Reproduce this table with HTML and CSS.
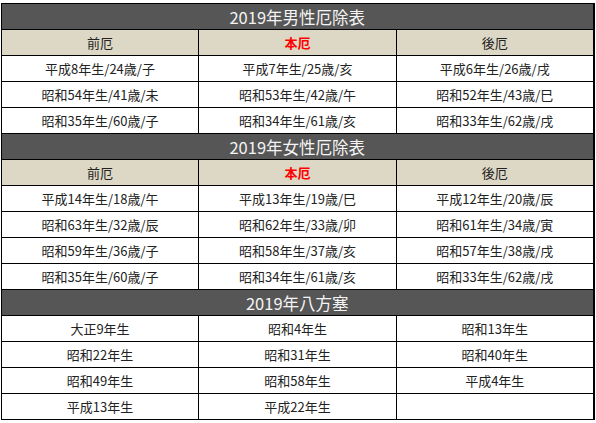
FILE: index.html
```html
<!DOCTYPE html>
<html lang="ja">
<head>
<meta charset="utf-8">
<link rel="stylesheet" href="styles.css">
</head>
<body>
<table class="yaku">
  <colgroup><col class="c1"><col class="c2"><col class="c3"></colgroup>
  <tr><th class="title" colspan="3">2019年男性厄除表</th></tr>
  <tr class="head"><td>前厄</td><td class="hon">本厄</td><td>後厄</td></tr>
  <tr><td>平成8年生/24歳/子</td><td>平成7年生/25歳/亥</td><td>平成6年生/26歳/戌</td></tr>
  <tr><td>昭和54年生/41歳/未</td><td>昭和53年生/42歳/午</td><td>昭和52年生/43歳/巳</td></tr>
  <tr><td>昭和35年生/60歳/子</td><td>昭和34年生/61歳/亥</td><td>昭和33年生/62歳/戌</td></tr>
  <tr><th class="title" colspan="3">2019年女性厄除表</th></tr>
  <tr class="head"><td>前厄</td><td class="hon">本厄</td><td>後厄</td></tr>
  <tr><td>平成14年生/18歳/午</td><td>平成13年生/19歳/巳</td><td>平成12年生/20歳/辰</td></tr>
  <tr><td>昭和63年生/32歳/辰</td><td>昭和62年生/33歳/卯</td><td>昭和61年生/34歳/寅</td></tr>
  <tr><td>昭和59年生/36歳/子</td><td>昭和58年生/37歳/亥</td><td>昭和57年生/38歳/戌</td></tr>
  <tr><td>昭和35年生/60歳/子</td><td>昭和34年生/61歳/亥</td><td>昭和33年生/62歳/戌</td></tr>
  <tr><th class="title" colspan="3">2019年八方塞</th></tr>
  <tr><td>大正9年生</td><td>昭和4年生</td><td>昭和13年生</td></tr>
  <tr><td>昭和22年生</td><td>昭和31年生</td><td>昭和40年生</td></tr>
  <tr><td>昭和49年生</td><td>昭和58年生</td><td>平成4年生</td></tr>
  <tr><td>平成13年生</td><td>平成22年生</td><td></td></tr>
</table>
</body>
</html>
```
FILE: styles.css
```css
html, body {
  margin: 0;
  padding: 0;
  background: #ffffff;
}
body {
  padding: 3px 0 0 1px;
  font-family: "Noto Sans CJK JP", "Noto Sans", sans-serif;
  color: #222222;
}
.yaku {
  border-collapse: collapse;
  width: 593px;
  table-layout: fixed;
  border-right: 2px solid #000;
}
.c1 { width: 197px; }
.c2 { width: 198px; }
.c3 { width: 197px; }
.yaku th, .yaku td {
  border: 1px solid #000;
  height: 26px;
  padding: 0;
  text-align: center;
  vertical-align: middle;
  box-sizing: border-box;
}
.yaku td {
  font-size: 13px;
  line-height: 16px;
}
.yaku .title {
  background: #565656;
  color: #f4f4f4;
  font-size: 16.5px;
  font-weight: normal;
  line-height: 22px;
}
.yaku .head td {
  background: #ddd8c6;
}
.yaku .hon {
  color: #ff0000;
  font-weight: bold;
}
```
